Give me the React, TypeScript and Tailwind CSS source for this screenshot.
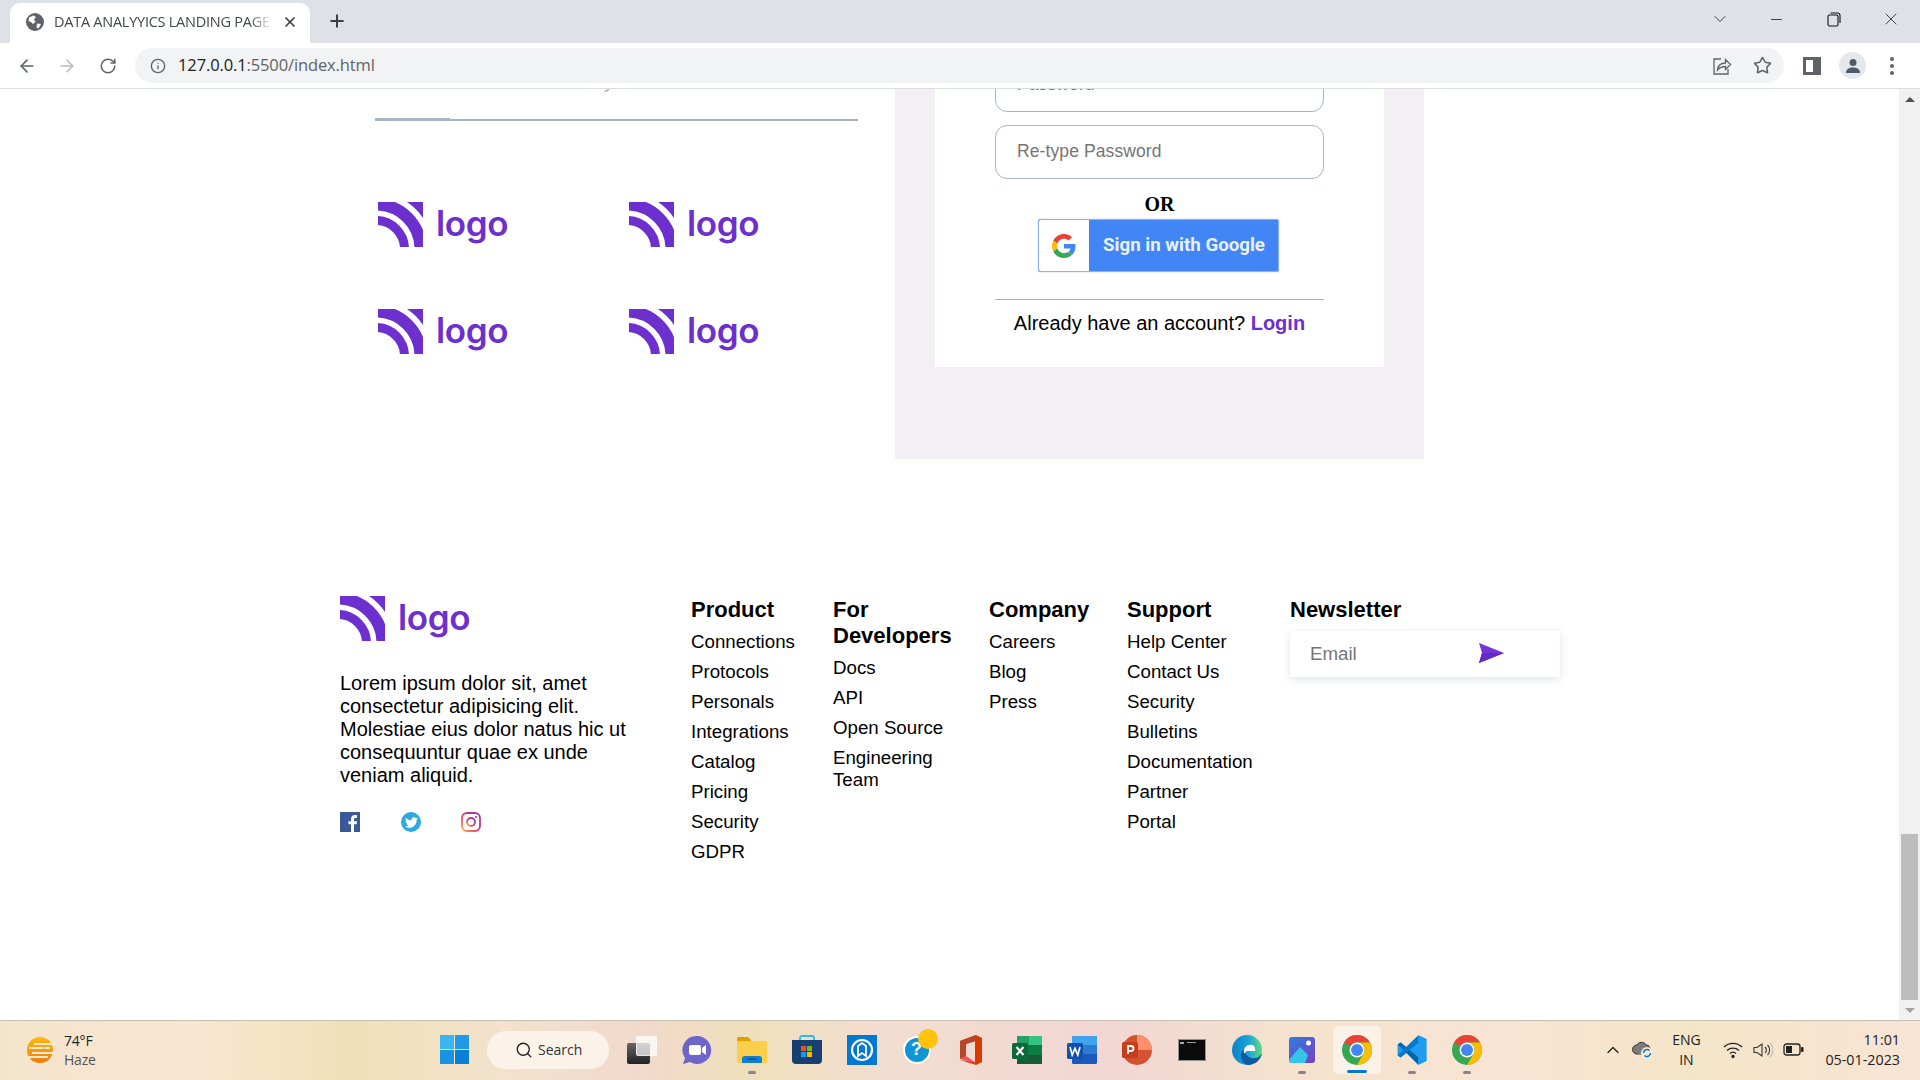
import React from "react";
import { ArrowLeft, ArrowRight, RotateCw, Info, Star, Plus, X, Minus, ChevronDown, ChevronUp, Search } from "lucide-react";
import { FaTwitter } from "react-icons/fa";

const P = "#6d2fcd";

function Logo() {
  return (
    <div className="flex items-start">
      <svg width="45" height="45" viewBox="0 0 45 45" className="shrink-0">
        <circle cx="-2" cy="47" r="44.5" fill="none" stroke={P} strokeWidth="12" />
        <circle cx="-2" cy="47" r="28.5" fill="none" stroke={P} strokeWidth="9" />
        <path d="M29 0H45V16A56.300 56.300 0 0 0 29 0Z" fill={P} />
      </svg>
      <span className="ml-[13px] -mt-[2px] font-['Inter'] font-semibold text-[35px] tracking-[-0.4px] leading-[46px] text-[#6d2fcd]">logo</span>
    </div>
  );
}

function GoogleG({ size = 24 }: { size?: number }) {
  return (
    <svg width={size} height={size} viewBox="0 0 48 48">
      <path fill="#EA4335" d="M24 9.5c3.54 0 6.71 1.22 9.21 3.6l6.85-6.85C35.9 2.38 30.47 0 24 0 14.62 0 6.51 5.38 2.56 13.22l7.98 6.19C12.43 13.72 17.74 9.5 24 9.5z" />
      <path fill="#4285F4" d="M46.98 24.55c0-1.57-.15-3.09-.38-4.55H24v9.02h12.94c-.58 2.96-2.26 5.48-4.78 7.18l7.73 6c4.51-4.18 7.09-10.36 7.09-17.65z" />
      <path fill="#FBBC05" d="M10.53 28.59c-.48-1.45-.76-2.99-.76-4.59s.27-3.14.76-4.59l-7.98-6.19C.92 16.46 0 20.12 0 24c0 3.88.92 7.54 2.56 10.78l7.97-6.19z" />
      <path fill="#34A853" d="M24 48c6.48 0 11.93-2.13 15.89-5.81l-7.73-6c-2.15 1.45-4.92 2.3-8.16 2.3-6.26 0-11.57-4.22-13.47-9.91l-7.98 6.19C6.51 42.62 14.62 48 24 48z" />
    </svg>
  );
}

function Chrome() {
  return (
    <svg width="30" height="30" viewBox="0 0 48 48">
      <circle cx="24" cy="24" r="24" fill="#34a853" />
      <path d="M24 0a24 24 0 0 1 20.8 12H24a12 12 0 0 0-10.4 6L3.2 12A24 24 0 0 1 24 0Z" fill="#ea4335" />
      <path d="M44.8 12A24 24 0 0 1 24 48l10.4-18A12 12 0 0 0 24 12Z" fill="#fbbc05" />
      <circle cx="24" cy="24" r="12" fill="#fff" />
      <circle cx="24" cy="24" r="9.5" fill="#4285f4" />
    </svg>
  );
}

function TaskIcon({ children, dot, active }: { children?: React.ReactNode; dot?: boolean; active?: boolean }) {
  return (
    <div className="relative w-[55px] h-[60px] shrink-0 flex items-center justify-center pb-[2px]">
      {active && <div className="absolute left-[3.5px] top-[5px] w-[48px] h-[48px] rounded-[5px] bg-white/50" />}
      <div className="relative flex items-center justify-center">{children}</div>
      {dot && <div className="absolute left-[23.5px] top-[50px] w-[8px] h-[3px] rounded-full bg-[#8a8580]" />}
      {active && <div className="absolute left-[17.5px] top-[49px] w-[20px] h-[3px] rounded-full bg-[#0078d4]" />}
    </div>
  );
}

const groups: { title: string; items: string[]; cls: string }[] = [
  { title: "Product", items: ["Connections", "Protocols", "Personals", "Integrations", "Catalog", "Pricing", "Security", "GDPR"], cls: "" },
  { title: "For Developers", items: ["Docs", "API", "Open Source", "Engineering Team"], cls: "w-[125px]" },
  { title: "Company", items: ["Careers", "Blog", "Press"], cls: "" },
  { title: "Support", items: ["Help Center", "Contact Us", "Security", "Bulletins", "Documentation", "Partner", "Portal"], cls: "" },
];

export default function App() {
  return (
    <div className="w-[1920px] h-[1080px] overflow-hidden flex flex-col bg-white font-['Liberation_Sans',sans-serif] text-black">
      {/* tab strip */}
      <div className="h-[43px] shrink-0 bg-[#dee1e6] flex items-end pl-[10px]">
        <div className="w-[300px] h-[41px] bg-white rounded-t-[10px] flex items-center pl-[16px] pr-[12px] pb-[3px] -mb-px">
          <svg width="18" height="18" viewBox="0 0 18 18" className="shrink-0">
            <circle cx="9" cy="9" r="9" fill="#5f6368" />
            <path d="M3 4.500 7.500 2.500 10 4 8 6.500 9.500 9 7 11 5 9 2.500 8Z" fill="#fff" />
            <path d="M11 10.500l4 .5-2.500 4.500-2-1Z" fill="#fff" />
          </svg>
          <span className="ml-[10px] w-[218px] shrink-0 overflow-hidden whitespace-nowrap font-['Open_Sans'] text-[14.5px] tracking-[-0.25px] text-[#45484c] [mask-image:linear-gradient(to_right,black_90%,transparent)]">DATA ANALYYICS LANDING PAGE</span>
          <X size={16} strokeWidth={2.6} className="ml-[10px] text-[#3c4043] shrink-0" />
        </div>
        <Plus size={20} strokeWidth={2.4} className="ml-[17px] mb-[12px] text-[#3c4043]" />
        <div className="flex-1" />
        <div className="self-start flex items-center h-[38px] text-[#222]">
          <ChevronDown size={20} strokeWidth={1} />
          <Minus size={17} strokeWidth={1.2} className="ml-[38px]" />
          <svg width="14" height="15" viewBox="0 0 14 15" fill="none" stroke="#111" strokeWidth="1.1" className="ml-[42px]">
            <rect x="1" y="3" width="10" height="11" rx="1.5" />
            <path d="M3.5 1h7a2.5 2.5 0 0 1 2.5 2.5V11" />
          </svg>
          <X size={20} strokeWidth={1} className="ml-[40px] mr-[19px]" />
        </div>
      </div>
      {/* toolbar */}
      <div className="h-[46px] shrink-0 bg-white border-b border-[#dadce0] flex items-center">
        <ArrowLeft size={20} strokeWidth={2} className="ml-[17px] text-[#5f6368]" />
        <ArrowRight size={20} strokeWidth={1.8} className="ml-[20px] text-[#b8babd]" />
        <RotateCw size={18} strokeWidth={2} className="ml-[22px] text-[#5f6368]" />
        <div className="ml-[18px] h-[35px] w-[1649px] rounded-full bg-[#f1f3f4] flex items-center pl-[15px]">
          <Info size={16} strokeWidth={2} className="text-[#5f6368]" />
          <span className="ml-[12px] font-['Open_Sans'] text-[16.5px] tracking-[-0.12px] text-[#5f6368]"><span className="text-[#202124]">127.0.0.1</span>:5500/index.html</span>
          <div className="flex-1" />
          <svg width="20" height="20" viewBox="0 0 20 20" fill="none" stroke="#5f6368" strokeWidth="1.3" className="ml-[1px]">
            <path d="M9 3H2v15h14v-5" />
            <path d="M5.5 14c.5-4.5 3.5-7 8-7V3.5l5 5-5 5V10.500c-3.5 0-6 1-8 3.500Z" />
          </svg>
          <Star size={19} strokeWidth={2} className="ml-[21px] mr-[12px] text-[#5f6368]" />
        </div>
        <div className="ml-[19px] w-[18px] h-[18px] border-[3px] border-[#5f6368] border-r-[8px] bg-white" />
        <div className="ml-[18px] w-[27px] h-[27px] rounded-full bg-[#e4e7ec] flex items-center justify-center">
          <svg width="16" height="16" viewBox="0 0 16 16" fill="#515a6a"><circle cx="8" cy="4.500" r="3.500" /><path d="M1 15c0-4 3-5.500 7-5.500s7 1.500 7 5.500Z" /></svg>
        </div>
        <div className="ml-[24px] flex flex-col gap-[3px]">
          <div className="w-[4px] h-[4px] rounded-full bg-[#5f6368]" />
          <div className="w-[4px] h-[4px] rounded-full bg-[#5f6368]" />
          <div className="w-[4px] h-[4px] rounded-full bg-[#5f6368]" />
        </div>
      </div>
      {/* viewport */}
      <div className="flex-1 min-h-0 flex">
        <div className="flex-1 min-w-0 overflow-hidden">
          <div className="flex pl-[375px] gap-[37px]">
            <div className="w-[483px]">
              <div className="-mt-[19px] h-[49px] pl-[145px] whitespace-nowrap text-[20px] leading-[23px] text-[#a8b5c2]">Trusted by</div>
              <div className="relative h-[2px] bg-[#a8b5c2]">
                <div className="absolute left-0 -top-px w-[75px] h-[1px] bg-[#a8b5c2]" />
              </div>
              <div className="mt-[81px] ml-[3px] grid grid-cols-[251px_1fr] auto-rows-[107px]">
                <Logo /><Logo /><Logo /><Logo />
              </div>
            </div>
            <div className="w-[529px] h-[370px] bg-[#f3eff5] px-[40px]">
              <div className="bg-white h-[278px] px-[60px]">
                <div className="relative -top-[31px]">
                  <div className="h-[54px] border border-[#a8b5c2] rounded-[12px] pl-[21px] pb-[1px] flex items-center text-[17.5px] tracking-[0.1px] text-[#757575]">Password</div>
                  <div className="mt-[13px] h-[54px] border border-[#a8b5c2] rounded-[12px] pl-[21px] pb-[1px] flex items-center text-[17.5px] tracking-[0.1px] text-[#757575]">Re-type Password</div>
                  <div className="mt-[14px] text-center font-['Liberation_Serif'] font-bold text-[20px] leading-[23px]">OR</div>
                  <div className="mt-[3px] ml-[43px] w-[241px] h-[53px] rounded-[2px] bg-[#4285f4] border border-[#8ab0f8] flex items-center shadow-[0_0_2px_rgba(0,0,0,0.2)]">
                    <div className="w-[50px] h-[51px] bg-white rounded-l-[2px] flex items-center justify-center"><GoogleG size={24} /></div>
                    <span className="ml-[14px] font-['Roboto'] font-bold text-[18.7px] text-[#e9f0fe] whitespace-nowrap">Sign in with Google</span>
                  </div>
                  <div className="mt-[27px] h-px bg-[#a8b5c2]" />
                  <div className="mt-[11px] text-center text-[20px] leading-[24px] whitespace-nowrap">Already have an account? <span className="font-bold text-[#6d2fcd]">Login</span></div>
                </div>
              </div>
            </div>
          </div>
          {/* footer */}
          <div className="mt-[138px] pl-[340px] grid grid-cols-[351px_142px_156px_138px_163px_269px]">
            <div className="-mt-px">
              <Logo />
              <p className="mt-[31px] w-[300px] text-[20px] leading-[23px]">Lorem ipsum dolor sit, amet consectetur adipisicing elit. Molestiae eius dolor natus hic ut consequuntur quae ex unde veniam aliquid.</p>
              <div className="mt-[25px] flex gap-[41px]">
                <svg width="20" height="20" viewBox="0 0 20 20"><rect width="20" height="20" fill="#3b5998" /><path d="M14 20v-7.700h2.600l.4-3H14V7.400c0-.9.300-1.500 1.500-1.500H17V3.200c-.3 0-1.200-.1-2.200-.1-2.300 0-3.800 1.400-3.800 3.900v2.300H8.400v3H11V20Z" fill="#fff" /></svg>
                <div className="w-[20px] h-[20px] rounded-full bg-[#2daae1] flex items-center justify-center"><FaTwitter size={13} color="#fff" /></div>
                <svg width="20" height="20" viewBox="0 0 20 20" fill="none" className="-ml-px">
                  <defs><linearGradient id="ig" x1="0" y1="1" x2="1" y2="0"><stop offset="0" stopColor="#fdb044" /><stop offset="0.45" stopColor="#e5366f" /><stop offset="1" stopColor="#8a3ab9" /></linearGradient></defs>
                  <rect x="1" y="1" width="18" height="18" rx="5" stroke="url(#ig)" strokeWidth="1.8" />
                  <circle cx="10" cy="10" r="4" stroke="url(#ig)" strokeWidth="1.8" />
                  <circle cx="15" cy="5" r="1.100" fill="#c13584" />
                </svg>
              </div>
            </div>
            {groups.map((g) => (
              <div key={g.title}>
                <h3 className={`font-bold text-[22px] leading-[26px] ${g.cls}`}>{g.title}</h3>
                <ul className={`mt-[8px] flex flex-col gap-[8px] text-[18.7px] leading-[22px] ${g.cls}`}>
                  {g.items.map((i) => <li key={i}>{i}</li>)}
                </ul>
              </div>
            ))}
            <div>
              <h3 className="font-bold text-[22px] leading-[26px]">Newsletter</h3>
              <div className="mt-[8px] w-[270px] h-[46px] bg-white shadow-[0_2px_8px_rgba(100,110,180,0.2)] flex items-center pl-[20px]">
                <span className="text-[18.7px] text-[#757575]">Email</span>
                <svg width="25" height="20" viewBox="0 0 25 20" className="ml-[122px] -mt-[3px]"><path d="M0 0 25 10 0 20 3 10Z" fill="#7434d8" /><path d="M3 10H25L0 20Z" fill="#6429c4" /></svg>
              </div>
            </div>
          </div>
        </div>
        {/* scrollbar */}
        <div className="w-[21px] shrink-0 bg-[#f1f1f1] flex flex-col items-center">
          <div className="h-[21px] flex items-center justify-center"><div className="w-0 h-0 border-x-[5px] border-x-transparent border-b-[5px] border-b-[#505050]" /></div>
          <div className="flex-1" />
          <div className="w-[17px] h-[166px] bg-[#bdbdbd]" />
          <div className="h-[20px] flex items-center justify-center"><div className="w-0 h-0 border-x-[5px] border-x-transparent border-t-[5px] border-t-[#a3a3a3]" /></div>
        </div>
      </div>
      {/* taskbar */}
      <div className="h-[60px] shrink-0 border-t border-[#c9c0b4] flex items-center bg-[linear-gradient(90deg,#f5e4cc_0%,#f9e6d2_10%,#f0e0b8_18%,#f3e2cc_26%,#f2d9cd_33%,#efe0bc_39%,#f3ddd0_46%,#f2d7d3_58%,#f5e3cd_68%,#f8e4d4_78%,#f5e5c8_88%,#f8e4d4_100%)]">
        <div className="w-[427px] shrink-0 flex items-center pl-[26px] pb-[2px]">
          <svg width="28" height="30" viewBox="0 0 28 30">
            <defs><linearGradient id="sun" x1="0" y1="0" x2="0" y2="1"><stop offset="0" stopColor="#fcb813" /><stop offset="1" stopColor="#ef7d0b" /></linearGradient></defs>
            <circle cx="14" cy="15" r="13" fill="url(#sun)" />
            <path d="M8 9h20M3 13h14M18 13h6M6 18h22M0 22h22" stroke="#f4e7cb" strokeWidth="2" />
          </svg>
          <div className="ml-[10px] font-['Open_Sans'] text-[14px] leading-[19px] tracking-[-0.2px]">
            <div className="text-[#222]">74°F</div>
            <div className="text-[#555]">Haze</div>
          </div>
        </div>
        <TaskIcon>
          <div className="grid grid-cols-2 gap-[1px] w-[29px] h-[29px]">
            <div className="bg-[#3cb4f0]" /><div className="bg-[#1f9ae6]" /><div className="bg-[#1a93e2]" /><div className="bg-[#0a7fd8]" />
          </div>
        </TaskIcon>
        <div className="ml-[5px] mb-[2px] w-[122px] h-[38px] shrink-0 rounded-full bg-[#fbf3ea] flex items-center pl-[28px]">
          <Search size={18} strokeWidth={1.8} className="text-[#222]" />
          <span className="ml-[5px] font-['Open_Sans'] text-[14px] text-[#333]">Search</span>
        </div>
        <div className="ml-[5px] flex">
          <TaskIcon>
            <div className="relative w-[30px] h-[28px]">
              <div className="absolute left-0 bottom-0 w-[23px] h-[21px] rounded-[2px] bg-[linear-gradient(180deg,#666,#222)]" />
              <div className="absolute right-0 top-0 w-[21px] h-[20px] rounded-[2px] bg-white/70 border border-white/60" />
            </div>
          </TaskIcon>
          <TaskIcon>
            <svg width="30" height="30" viewBox="0 0 30 30">
              <path d="M15 1a14 14 0 1 1-7 26L1 29l2-6A14 14 0 0 1 15 1Z" fill="#6f64c9" />
              <rect x="7" y="10" width="12" height="10" rx="2" fill="#fff" />
              <path d="M20 13l4-3v10l-4-3Z" fill="#fff" />
            </svg>
          </TaskIcon>
          <TaskIcon dot>
            <svg width="30" height="27" viewBox="0 0 30 27">
              <path d="M0 2a1 1 0 0 1 1-1h10l3 3v4H0Z" fill="#dfa100" />
              <path d="M0 5h30v22H0Z" fill="#fbcf4b" />
              <path d="M5 27v-4a3 3 0 0 1 3-3h14a3 3 0 0 1 3 3v4Z" fill="#0f7fd1" />
              <path d="M11 23h8" stroke="#063f70" strokeWidth="1" />
            </svg>
          </TaskIcon>
          <TaskIcon>
            <svg width="30" height="30" viewBox="0 0 30 30">
              <path d="M8 5V3a2 2 0 0 1 2-2h10a2 2 0 0 1 2 2v2" fill="none" stroke="#2fb8e6" strokeWidth="1.800" />
              <path d="M0 5h30v20a4 4 0 0 1-4 4H4a4 4 0 0 1-4-4Z" fill="#173f72" />
              <rect x="9" y="11" width="5" height="5" fill="#f25022" /><rect x="15" y="11" width="5" height="5" fill="#7fba00" />
              <rect x="9" y="17" width="5" height="5" fill="#00a4ef" /><rect x="15" y="17" width="5" height="5" fill="#ffb900" />
            </svg>
          </TaskIcon>
          <TaskIcon>
            <div className="w-[30px] h-[30px] bg-[#0078d4] flex items-center justify-center">
              <svg width="24" height="24" viewBox="0 0 24 24" fill="none" stroke="#fff" strokeWidth="2.200">
                <circle cx="12" cy="12" r="10" />
                <path d="M8 18V8l4-3 4 3v10l-4-3Z" strokeWidth="1.800" />
              </svg>
            </div>
          </TaskIcon>
          <TaskIcon>
            <div className="relative">
              <div className="w-[28px] h-[28px] rounded-full bg-[#0f94d4] border-2 border-white flex items-center justify-center font-['Liberation_Sans'] font-bold text-[18px] text-white">?</div>
              <div className="absolute -right-[7px] -top-[7px] w-[20px] h-[20px] rounded-full bg-[#ffc20e]" />
            </div>
          </TaskIcon>
          <TaskIcon>
            <svg width="24" height="30" viewBox="0 0 24 30">
              <path d="M0 6 16 0l6 3v24l-6 3-16-5 15 2V6L6 9v12l-6 3Z" fill="#d83b01" />
              <path d="M0 6 16 0v6L6 9v12l-6 3Z" fill="#b7472a" />
              <path d="M0 24l6-3 9 6v1Z" fill="#e55" />
            </svg>
          </TaskIcon>
          <TaskIcon>
            <svg width="30" height="28" viewBox="0 0 30 28">
              <rect x="5" y="0" width="25" height="28" rx="1.500" fill="#107c41" />
              <rect x="17" y="0" width="13" height="9" fill="#33c481" /><rect x="5" y="0" width="12" height="9" fill="#21a366" />
              <rect x="5" y="19" width="25" height="9" fill="#185c37" />
              <rect x="0" y="7" width="16" height="16" rx="1.500" fill="#0b6a3a" />
              <path d="M4.500 11l7 8M11.500 11l-7 8" stroke="#fff" strokeWidth="2" />
            </svg>
          </TaskIcon>
          <TaskIcon>
            <svg width="30" height="28" viewBox="0 0 30 28">
              <rect x="5" y="0" width="25" height="28" rx="1.500" fill="#185abd" />
              <rect x="5" y="0" width="25" height="9" fill="#41a5ee" /><rect x="5" y="9" width="25" height="9" fill="#2b7cd3" />
              <rect x="0" y="7" width="16" height="16" rx="1.500" fill="#124fb0" />
              <path d="M3 11l2.200 8L8 12.500l2.800 6.500L13 11" fill="none" stroke="#fff" strokeWidth="1.700" />
            </svg>
          </TaskIcon>
          <TaskIcon>
            <svg width="30" height="30" viewBox="0 0 30 30">
              <circle cx="15" cy="15" r="15" fill="#d35230" />
              <path d="M15 0a15 15 0 0 1 15 15H15Z" fill="#ff8f6b" />
              <rect x="0" y="7" width="16" height="16" rx="1.500" fill="#c43e1c" />
              <path d="M6 19v-8h3a2.500 2.500 0 0 1 0 5H6" fill="none" stroke="#fff" strokeWidth="1.800" />
            </svg>
          </TaskIcon>
          <TaskIcon>
            <svg width="28" height="22" viewBox="0 0 28 22">
              <rect width="28" height="22" fill="#8f9396" />
              <rect x="1" y="1" width="26" height="20" fill="#0b0b0b" />
              <rect x="2" y="3" width="4" height="2" fill="#aaa" /><rect x="9" y="3" width="9" height="1" fill="#999" />
            </svg>
          </TaskIcon>
          <TaskIcon>
            <svg width="30" height="30" viewBox="0 0 30 30">
              <defs>
                <linearGradient id="edge" x1="0" y1="0.300" x2="1" y2="0.300"><stop offset="0" stopColor="#0d7fc9" /><stop offset="0.55" stopColor="#1ba4d8" /><stop offset="1" stopColor="#5fdc7a" /></linearGradient>
              </defs>
              <circle cx="15" cy="15" r="15" fill="url(#edge)" />
              <path d="M13 15c0 5 4 9 10 8 3 0 5-2 7-5-1 7-7 12-14 12-2 0-7-3-7-9 0-4 2-7 4-6Z" fill="#0b5aa3" />
              <path d="M12 18c-1-6 4-9 8-8 2 .5 4 3 3 6h-9c0 1-1 3-2 2Z" fill="#fff" />
            </svg>
          </TaskIcon>
          <TaskIcon dot>
            <svg width="26" height="26" viewBox="0 0 26 26">
              <defs><linearGradient id="ph" x1="0" y1="0" x2="1" y2="1"><stop offset="0" stopColor="#2f7ce0" /><stop offset="1" stopColor="#7a3fc0" /></linearGradient></defs>
              <rect width="26" height="26" rx="3" fill="url(#ph)" />
              <circle cx="19.500" cy="6" r="2.500" fill="#fff" />
              <path d="M0 23 11 10l8 8-3 8H3a3 3 0 0 1-3-3Z" fill="#36c5ea" />
            </svg>
          </TaskIcon>
          <TaskIcon active><Chrome /></TaskIcon>
          <TaskIcon dot>
            <svg width="30" height="30" viewBox="0 0 100 100">
              <path d="M71 99 31 60 12 75 2 68V32l10-7 19 15L71 1l27 12v74Z" fill="#1f9cf0" />
              <path d="M2 32l10-7 60 50-1 24-40-40Z" fill="#0065a9" />
              <path d="M2 68l10 7 60-50V1L31 40Z" fill="#007acc" />
              <path d="M71 1l27 12v74L71 99Z" fill="#1f9cf0" />
            </svg>
          </TaskIcon>
          <TaskIcon dot><Chrome /></TaskIcon>
        </div>
        <div className="flex-1" />
        <ChevronUp size={20} strokeWidth={1.500} className="text-[#222] mb-[2px]" />
        <svg width="22" height="20" viewBox="0 0 22 20" className="ml-[9px] mb-[2px]">
          <path d="M5 14a4.500 4.500 0 0 1 0-9c1-3 7-4 9 0 3 0 4 2 4 5" fill="#7b7b7b" stroke="#333" strokeWidth="1" />
          <path d="M5 14H13" stroke="#333" strokeWidth="1" />
          <circle cx="15" cy="13" r="6" fill="#f8e8d8" />
          <path d="M11.500 13a3.500 3.500 0 0 1 6-2.500M18.500 13a3.500 3.500 0 0 1-6 2.500" fill="none" stroke="#0078d4" strokeWidth="1.500" />
        </svg>
        <div className="ml-[17px] mb-[2px] w-[30px] text-center font-['Open_Sans'] text-[14px] leading-[20px] text-[#222]">ENG<br />IN</div>
        <svg width="20" height="18" viewBox="0 0 20 18" fill="none" stroke="#222" strokeWidth="1.300" className="ml-[22px] mb-[2px]">
          <path d="M1 6a13 13 0 0 1 18 0M4 9.500a9 9 0 0 1 12 0M7 12.500a4.500 4.500 0 0 1 6 0" />
          <circle cx="10" cy="15.500" r="1" fill="#222" />
        </svg>
        <svg width="20" height="18" viewBox="0 0 20 18" fill="none" stroke="#333" strokeWidth="1.100" className="ml-[10px] mb-[2px]">
          <path d="M1 6.500h3L9 3v12L4 11.500H1Z" />
          <path d="M12 6a4 4 0 0 1 0 6" /><path d="M14.500 4a7 7 0 0 1 0 10" /><path d="M17 2a10 10 0 0 1 0 14" stroke="#bbb" />
        </svg>
        <svg width="21" height="13" viewBox="0 0 21 13" fill="none" className="ml-[10px] mb-[2px]">
          <rect x="1" y="1" width="16" height="11" rx="2.500" stroke="#222" strokeWidth="1.300" />
          <rect x="3" y="3" width="6" height="7" fill="#222" />
          <rect x="18" y="4" width="2.500" height="5" rx="1" fill="#222" />
        </svg>
        <div className="ml-[21px] mr-[20px] mb-[2px] text-right font-['Open_Sans'] text-[14.3px] leading-[20px] text-[#222] whitespace-nowrap">11:01<br />05-01-2023</div>
      </div>
    </div>
  );
}
